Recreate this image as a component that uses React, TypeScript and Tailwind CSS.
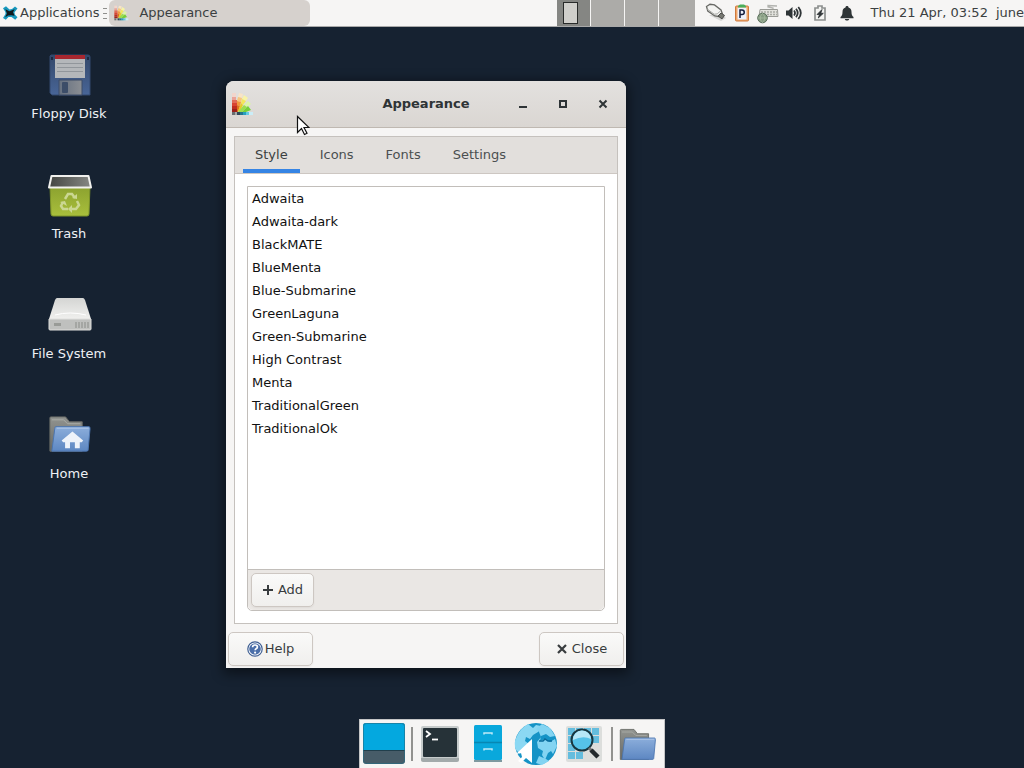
import React, { useState } from "react";

const TABS = ["Style", "Icons", "Fonts", "Settings"];
const STYLES = [
  "Adwaita",
  "Adwaita-dark",
  "BlackMATE",
  "BlueMenta",
  "Blue-Submarine",
  "GreenLaguna",
  "Green-Submarine",
  "High Contrast",
  "Menta",
  "TraditionalGreen",
  "TraditionalOk",
];

function XfceLogo() {
  return (
    <svg className="h-4 w-4 shrink-0" viewBox="0 0 16 16" aria-hidden="true">
      <path d="M1 3.2 4 1.3 7.5 4.5 10 4 13 1.5 15.5 3.5 12.5 7.3 12.8 9.5 15.5 12.3 13.2 14.8 9.5 12 6.5 12 3.8 14.8 1 13 3.5 9 3.4 7Z" fill="#1798bd" />
      <path d="M3.4 4.3 7.4 6.3 12.6 4.2 11 7.3 12.6 10.8 9.3 10.2 6 10.6 3.2 12.3 4.9 8.5Z" fill="#11191c" />
    </svg>
  );
}

function PaletteIcon({ className }: { className: string }) {
  return (
    <svg className={className} viewBox="0 0 24 24" aria-hidden="true">
      <path d="M2 1h4v4H2z" fill="#f2d5cb" />
      <path d="M2 5h4v3H2z" fill="#eaa398" />
      <path d="M2 8h5v3H2z" fill="#e06a58" />
      <path d="M2 11h5v3H2z" fill="#d94332" />
      <path d="M2 14h5v3H2z" fill="#bf2c20" />
      <path d="M2 17h5v3H2z" fill="#9c201b" />
      <path d="m9 1 4 1-1 4-4-1z" fill="#f8e4c6" />
      <path d="m8 5 4 1-1 4-4-1z" fill="#f9c67c" />
      <path d="m7 9 4 1-1 4-3-1z" fill="#f3993c" />
      <path d="m7 13 3 1-2 6H7z" fill="#e06f1d" />
      <path d="m14 3 4 3-2 3-4-2z" fill="#f8f3a6" />
      <path d="m12 7 4 2-3 4-2-2z" fill="#f3e758" />
      <path d="m11 11 2 2-3 6H8z" fill="#e5cb28" />
      <path d="m18 9 3 3-4 3-3-2z" fill="#dcf5a6" />
      <path d="m14 13 3 2-5 5H8z" fill="#9bdf4c" />
      <path d="m18 14 3 4-5 2h-4z" fill="#76cf38" />
      <path d="M2 20h3v3H2z" fill="#696d70" />
      <path d="M5 20h2v3H5z" fill="#a7aaa9" />
      <path d="M7 20h3v3H7z" fill="#30495a" />
      <path d="M10 20h3v3h-3z" fill="#23758f" />
      <path d="M13 20h3v3h-3z" fill="#299fbe" />
      <path d="M16 20h3v3h-3z" fill="#65c9e4" />
      <path d="M19 20h4v3h-4z" fill="#caedf7" />
    </svg>
  );
}

function UsbIcon() {
  return (
    <svg className="h-6 w-6" viewBox="0 0 24 24" aria-hidden="true">
      <path d="m6 14 12 6 5-3-4-3z" fill="#d5d5d3" />
      <path d="M3.5 5.5 7 3.3l4.500.6 6.500 5.100 1.300 3.500-3.500 3-4-.5-7-5Z" fill="#f3f3f1" stroke="#686965" strokeWidth="1.3" />
      <path d="m4.200 8 7 5.200 3-.3 3.400-3" fill="none" stroke="#a8a9a5" strokeWidth="1" />
      <path d="m15 15 3-3 3.500 2.400-2.500 3.500Z" fill="#777872" stroke="#4b4c49" strokeWidth="1" />
    </svg>
  );
}

function ClipboardIcon() {
  return (
    <svg className="h-5 w-4" viewBox="0 0 16 20" aria-hidden="true">
      <rect x="1.500" y="3" width="13" height="15" rx="1" fill="#f0a66a" stroke="#cf7a3d" />
      <rect x="3.500" y="4.500" width="9" height="12" fill="#eef2fb" />
      <path d="M4 4.500V3l2-1.500h4L12 3v1.500z" fill="#49ae5a" />
      <path d="M6 15V7h2a2.200 2.200 0 0 1 0 4.500H6" fill="none" stroke="#141c3c" strokeWidth="1.500" />
    </svg>
  );
}

function KeyboardIcon() {
  return (
    <svg className="h-6 w-6" viewBox="0 0 24 24" aria-hidden="true">
      <path d="M17 9V7l-5-1V4.500l9 .5" fill="none" stroke="#b2b3af" strokeWidth="1.3" />
      <path d="M4 8.500h17.500l.500 7H3z" fill="#e2e2dd" stroke="#9a9b96" />
      <path d="M5 11h16M5 13.500h16" stroke="#a9aaa4" strokeWidth="1.3" strokeDasharray="2 1" />
      <circle cx="6.5" cy="17" r="4.800" fill="#879c83" stroke="#5d725e" />
      <path d="M2 17h9M6.5 12.5c-3 3-3 6 0 9m0-9c3 3 3 6 0 9" fill="none" stroke="#a8bca1" strokeWidth=".8" />
    </svg>
  );
}

function SpeakerIcon() {
  return (
    <svg className="h-4 w-4" viewBox="0 0 16 16" aria-hidden="true">
      <path d="M0 5.500h2.500L6.500 2v12l-4-3.500H0z" fill="#2e3436" />
      <path d="M8 5.500q2 2.500 0 5M10 3.800q3.400 4.200 0 8.400M12.300 2q5 6 0 12" fill="none" stroke="#2e3436" strokeWidth="1.800" />
    </svg>
  );
}

function BatteryIcon() {
  return (
    <svg className="h-4 w-3" viewBox="0 0 12 16" aria-hidden="true">
      <path d="M1 3h3V1h4v2h3v12H1z" fill="#f4f4f2" stroke="#8d908f" strokeWidth="1.7" />
      <path d="M8 4.500 3 9.500h2.500L4.300 13l5-4.700H6.800z" fill="#2e3436" stroke="#2e3436" strokeWidth=".8" />
    </svg>
  );
}

function BellIcon() {
  return (
    <svg className="h-4 w-3.5" viewBox="0 0 14 16" aria-hidden="true">
      <path d="M7 1c1 0 1.500.6 1.500 1.400C10.900 3 11.500 5 11.500 7c0 3 .8 4 2 5v1.300H.500V12c1.200-1 2-2 2-5 0-2 .600-4 3-4.600C5.500 1.600 6 1 7 1M4.800 14h4.400c-.4 2-4 2-4.400 0" fill="#2e3436" />
    </svg>
  );
}

function FloppyIcon() {
  return (
    <svg className="h-12 w-12" viewBox="0 0 48 48" aria-hidden="true">
      <defs>
        <linearGradient id="floppyBody" x1="0" y1="0" x2="0" y2="1">
          <stop offset="0" stopColor="#34486a" />
          <stop offset="1" stopColor="#486597" />
        </linearGradient>
        <linearGradient id="floppyShutter">
          <stop offset="0" stopColor="#657080" />
          <stop offset="1" stopColor="#8b8e93" />
        </linearGradient>
      </defs>
      <path d="M6 4h37q2 0 2 2v38H7l-2-2V5z" fill="url(#floppyBody)" stroke="#33496e" />
      <path d="M10 4h30v4H10z" fill="#a8272f" />
      <path d="M10 8h30v19H10z" fill="#b4b7ba" />
      <path d="M12 12.500h26M12 16.500h26M12 20.500h26" stroke="#91969b" />
      <path d="M14 29h23v15H14z" fill="url(#floppyShutter)" stroke="#3c4d68" />
      <rect x="17" y="31" width="6" height="11" rx="1" fill="#3c4d68" />
      <path d="M6 6h2v3H6zm36 0h2v3h-2z" fill="#1b2940" />
    </svg>
  );
}

function TrashIcon() {
  return (
    <svg className="h-12 w-12" viewBox="0 0 48 48" aria-hidden="true">
      <defs>
        <linearGradient id="trashBody" x1="0" y1="0" x2="0" y2="1">
          <stop offset="0" stopColor="#8ba12f" />
          <stop offset="1" stopColor="#a9bf3c" />
        </linearGradient>
        <linearGradient id="trashInside">
          <stop offset="0" stopColor="#444642" />
          <stop offset="1" stopColor="#868884" />
        </linearGradient>
      </defs>
      <path d="M5 15h40l-1 28q0 2-2 2H8q-2 0-2-2z" fill="url(#trashBody)" stroke="#7c9329" />
      <path d="M6.500 5h37l2.500 11.500H4z" fill="url(#trashInside)" stroke="#f1f1ee" strokeWidth="2" strokeLinejoin="round" />
      <g fill="none" stroke="#cbd792" strokeWidth="2.500">
        <path d="m20 28 3-5h4l3 4" />
        <path d="m32 30 2 4-3 4h-4" />
        <path d="M23 38h-5l-2-3 2-4" />
      </g>
      <path d="m27 27 5 1V23zm0 7v8l-4-4zm-12-3 5-1 2 5z" fill="#cbd792" />
    </svg>
  );
}

function DriveIcon() {
  return (
    <svg className="h-12 w-12" viewBox="0 0 48 48" aria-hidden="true">
      <defs>
        <linearGradient id="driveTop" x1="0" y1="0" x2="0" y2="1">
          <stop offset="0" stopColor="#d4d5d3" />
          <stop offset="1" stopColor="#f0f0ee" />
        </linearGradient>
      </defs>
      <path d="M12 7h26q1 0 2 2l6 19H4l6-19q1-2 2-2" fill="url(#driveTop)" />
      <path d="M4 28h42v10q0 1-1 1H5q-1 0-1-1z" fill="#bfc0be" stroke="#dededc" />
      <path d="M10 24q15-4 31 0" fill="none" stroke="#fff" />
      <path d="M31 31v6m3-6v6m3-6v6m3-6v6m3-6v6" stroke="#8a8c88" />
      <path d="M9 32h7v3H9z" fill="#999b97" />
    </svg>
  );
}

function FolderIcon({ home = false }: { home?: boolean }) {
  return (
    <svg className="h-12 w-12" viewBox={home ? "-1 -1 49 49" : "-1 -6 56 56"} aria-hidden="true">
      <defs>
        <linearGradient id="folderFront" x1="0" y1="0" x2="0" y2="1">
          <stop offset="0" stopColor="#8caedb" />
          <stop offset="1" stopColor="#5d87c2" />
        </linearGradient>
        <linearGradient id="folderBack" x1="0" y1="0" x2="0" y2="1">
          <stop offset="0" stopColor="#929490" />
          <stop offset="1" stopColor="#666864" />
        </linearGradient>
      </defs>
      <path d="M4 40V6q0-1 1-1h15l4 5h13v30z" fill="url(#folderBack)" stroke="#666864" />
      <path d="M6 8h12l4 4h13" fill="none" stroke="#aaaca7" />
      <path d="M10 15h34q1 0 1 2l-2 22q0 1-2 1H6l3-23q0-2 1-2" fill="url(#folderFront)" stroke="#4b75b0" />
      <path d="M11 16.500h32.500" stroke="#b3cae9" />
      {home && <path d="m27 20 11 9-1.500 2h-2v6h-5v-6h-5v6h-5v-6h-2L16 29z" fill="#eef3fa" />}
    </svg>
  );
}

function HelpIcon() {
  return (
    <svg className="h-4 w-4" viewBox="0 0 16 16" aria-hidden="true">
      <circle cx="8" cy="8" r="7.200" fill="#fff" stroke="#3f5f93" strokeWidth="1.200" />
      <circle cx="8" cy="8" r="5.800" fill="#4b6fa9" />
      <path d="M5.600 6.200q0-2.200 2.400-2.200t2.400 2q0 1.100-1.300 1.800-.9.500-.9 1.500" fill="none" stroke="#fff" strokeWidth="1.700" />
      <circle cx="8.100" cy="11.600" r="1.100" fill="#fff" />
    </svg>
  );
}

function DesktopIcon() {
  return (
    <svg className="h-12 w-12" viewBox="0 0 48 48" aria-hidden="true">
      <rect x="3" y="3" width="42" height="41" rx="3" fill="#475c68" />
      <path d="M3 30V6q0-3 3-3h36q3 0 3 3v24z" fill="#04a8df" />
      <path d="M3 30.500h42" stroke="#213f4c" />
      <rect x="3.500" y="3.500" width="41" height="40" rx="3" fill="none" stroke="#246c86" strokeOpacity=".6" />
    </svg>
  );
}

function TerminalIcon() {
  return (
    <svg className="h-12 w-12" viewBox="0 0 48 48" aria-hidden="true">
      <rect x="5" y="6" width="38" height="35" rx="2" fill="#c6cbcb" />
      <path d="M5 38h38v2q0 2-2 2H7q-2 0-2-2z" fill="#a3aaab" />
      <rect x="7" y="8" width="34" height="29" rx="1" fill="#263238" />
      <path d="m10 11 4 3-4 3" fill="none" stroke="#fff" strokeWidth="1.800" />
      <path d="M16 19.500h6" stroke="#fff" strokeWidth="1.800" />
    </svg>
  );
}

function CabinetIcon() {
  return (
    <svg className="h-12 w-12" viewBox="0 0 48 48" aria-hidden="true">
      <path d="M10 40h28v2H10z" fill="#7e999f" />
      <rect x="10" y="5" width="28" height="35" rx="1.500" fill="#09a8dc" />
      <path d="M10 22.500h28" stroke="#0787b3" strokeWidth="1.500" />
      <path d="M20 14.500V13h8v1.500M20 30.500V29h8v1.500" fill="none" stroke="#bfeaf8" strokeWidth="1.500" />
    </svg>
  );
}

function GlobeIcon() {
  return (
    <svg className="h-12 w-12" viewBox="0 0 48 48" aria-hidden="true">
      <circle cx="24" cy="24" r="21" fill="#1593c6" />
      <path d="M5 16C7 11 11 7 16 4l5 4 3-3 5 1-3 6-5 3-3 4-4-2-1 4 4 3-5 5-4 5-4-4q-3-7 1-14" fill="#8bd8f3" />
      <path d="m30 4 8 4 5 8-5 1-4-3-5 2-1 5 5-2 5 3 5-3 2 7-4 8-2-3-3 2-3 7-3-5 1-4-5-3-1-6 4-5-2-5-3-3z" fill="#83d4f2" />
      <path d="m27 36 7 3 3 2-7 4-6-2z" fill="#83d4f2" />
      <path d="M27 21h4l2-2 3 2h4" fill="none" stroke="#086a9a" strokeWidth="1.500" />
      <path d="m20 19-16 15 5-1 1 4-4 4 3 2 5-5 6 5z" fill="#fff" />
    </svg>
  );
}

function SearchIcon() {
  return (
    <svg className="h-12 w-12" viewBox="0 0 48 48" aria-hidden="true">
      <rect x="6" y="6" width="36" height="36" rx="2" fill="#dcdedc" />
      <path d="M8 8h7v7H8zm8 0h7v7h-7zm8 0h7v7h-7zm8 0h7v7h-7zM8 16h7v7H8zm24 0h7v7h-7zM8 24h7v7H8zm0 8h7v7H8zm8 0h7v7h-7z" fill="#64bdde" />
      <circle cx="22" cy="20" r="10.500" fill="#56c2e9" stroke="#183640" strokeWidth="2" />
      <path d="M13 20a9 9 0 0 1 18-1q-8-4-18 1" fill="#b7e7f7" />
      <path d="m29 28 3 3" stroke="#777" strokeWidth="3" />
      <path d="m31 30 7 7" stroke="#242a2d" strokeWidth="4.500" />
    </svg>
  );
}

function TopPanel() {
  return (
    <header className="flex h-[27px] shrink-0 items-center border-b border-[#a9a9a9] bg-[#f6f5f4] text-[#3b3f41]">
      <button className="flex h-full items-center gap-0.5 pl-0.5 whitespace-nowrap">
        <XfceLogo />
        Applications
      </button>
      <span className="ml-1 flex w-1 flex-col gap-1" aria-hidden="true">
        <i className="h-px bg-[#8f8f8c]" />
        <i className="h-px bg-[#8f8f8c]" />
        <i className="h-px bg-[#8f8f8c]" />
      </span>
      <button className="ml-0.5 flex h-full w-[201px] items-center gap-2.5 rounded-md bg-[#d6d1cd] pl-1 text-left">
        <PaletteIcon className="h-4 w-4" />
        Appearance
      </button>
      <div className="ml-auto flex shrink-0 items-center">
        <div className="flex h-[26px] gap-px" role="group" aria-label="Workspaces">
          <button className="flex w-[33px] items-center bg-[#858683] pl-1.5" aria-label="Workspace 1">
            <span className="block h-[22px] w-[15px] border border-[#292b2a] bg-[#d0cfcb]" />
          </button>
          <button className="w-[33px] bg-[#acaba8]" aria-label="Workspace 2" />
          <button className="w-[33px] bg-[#acaba8]" aria-label="Workspace 3" />
          <button className="w-9 bg-[#acaba8]" aria-label="Workspace 4" />
        </div>
        <button className="ml-2" aria-label="Removable drive"><UsbIcon /></button>
        <button className="ml-[7px]" aria-label="Clipboard"><ClipboardIcon /></button>
        <button className="ml-1.5" aria-label="Keyboard layout"><KeyboardIcon /></button>
        <button className="ml-1.5" aria-label="Volume"><SpeakerIcon /></button>
        <button className="ml-3" aria-label="Power"><BatteryIcon /></button>
        <button className="ml-3.5" aria-label="Notifications"><BellIcon /></button>
        <button className="ml-4 whitespace-nowrap">Thu 21 Apr, 03:52</button>
        <button className="ml-2">june</button>
      </div>
    </header>
  );
}

function Shortcut({ label, children }: { label: string; children: React.ReactNode }) {
  return (
    <button className="flex h-[120px] w-full flex-col items-center text-[#eef1f5]">
      {children}
      <span className="mt-[5px] leading-5">{label}</span>
    </button>
  );
}

const BUTTON =
  "flex items-center justify-center rounded-[5px] border border-[#cdc7c2] bg-linear-to-b from-[#fafaf9] to-[#f0efed] text-[#383c3e] shadow-xs";

function AppearanceWindow() {
  const [tab, setTab] = useState("Style");
  return (
    <section
      aria-label="Appearance"
      className="absolute top-[81px] left-[226px] w-[400px] rounded-t-lg bg-[#f6f5f4] shadow-[0_3px_12px_3px_rgba(0,0,0,0.45)]"
    >
      <div className="grid h-[47px] grid-cols-[120px_1fr_120px] items-center rounded-t-lg border-b border-[#bfb8b1] bg-linear-to-b from-[#e3e1df] to-[#dad6d2] text-[#2e3436]">
        <PaletteIcon className="ml-1 h-6 w-6" />
        <h1 className="text-center font-bold">Appearance</h1>
        <div className="flex justify-end gap-4 pr-[11px]">
          <button className="flex h-6 w-6 items-center justify-center" aria-label="Minimize">
            <svg className="h-4 w-4" viewBox="0 0 16 16"><path d="M4 11h8" stroke="currentColor" strokeWidth="2" /></svg>
          </button>
          <button className="flex h-6 w-6 items-center justify-center" aria-label="Maximize">
            <svg className="h-4 w-4" viewBox="0 0 16 16"><path d="M5 5h6v6H5z" fill="none" stroke="currentColor" strokeWidth="2" /></svg>
          </button>
          <button className="flex h-6 w-6 items-center justify-center" aria-label="Close window">
            <svg className="h-4 w-4" viewBox="0 0 16 16"><path d="m4.500 4.500 7 7m0-7-7 7" stroke="currentColor" strokeWidth="2" /></svg>
          </button>
        </div>
      </div>

      <div className="mx-2 mt-2 border border-[#c5c1bd] bg-white">
        <div role="tablist" className="flex h-[37px] gap-2 border-b border-[#cdc7c2] bg-[#e2dfdc] px-2">
          {TABS.map((name) => (
            <button
              key={name}
              role="tab"
              aria-selected={tab === name}
              onClick={() => setTab(name)}
              className={
                tab === name
                  ? "border-b-4 border-[#3584e4] px-3 pt-1 text-[#3b3f41]"
                  : "border-b-4 border-transparent px-3 pt-1 text-[#4b4f50]"
              }
            >
              {name}
            </button>
          ))}
        </div>
        <div className="p-3">
          <div className="rounded-b-[5px] border border-[#c2beba]">
            <ul role="listbox" aria-label="Style" className="h-[382px] bg-white text-[#111]">
              {STYLES.map((name) => (
                <li key={name} role="option" aria-selected="false" className="h-[23px] px-1 leading-[23px]">
                  {name}
                </li>
              ))}
            </ul>
            <div className="flex h-[41px] items-center rounded-b-[5px] border-t border-[#c2beba] bg-[#eae7e4] px-[3px]">
              <button className={`${BUTTON} h-[34px] w-[63px] gap-1`}>
                <svg className="h-3 w-3" viewBox="0 0 12 12" aria-hidden="true"><path d="M6 1v10M1 6h10" stroke="currentColor" strokeWidth="2" /></svg>
                Add
              </button>
            </div>
          </div>
        </div>
      </div>

      <div className="flex justify-between px-0.5 pt-2 pb-0.5">
        <button className={`${BUTTON} h-[34px] w-[85px] gap-0.5`}>
          <HelpIcon />
          Help
        </button>
        <button className={`${BUTTON} h-[34px] w-[85px] gap-1`}>
          <svg className="h-3 w-3" viewBox="0 0 12 12" aria-hidden="true"><path d="m2 2 8 8m0-8-8 8" stroke="currentColor" strokeWidth="2.200" /></svg>
          Close
        </button>
      </div>
    </section>
  );
}

function Dock() {
  return (
    <nav
      aria-label="Dock"
      className="absolute bottom-0 left-1/2 flex h-[49px] w-[306px] -translate-x-1/2 items-center border border-b-0 border-[#c4c5c6] bg-[#f6f5f4]"
    >
      <button aria-label="Show desktop"><DesktopIcon /></button>
      <span className="ml-[3px] h-[34px] w-0.5 bg-[#92928f]" />
      <button className="ml-[3px]" aria-label="Terminal"><TerminalIcon /></button>
      <button aria-label="File manager"><CabinetIcon /></button>
      <button aria-label="Web browser"><GlobeIcon /></button>
      <button aria-label="Application finder"><SearchIcon /></button>
      <span className="ml-[3px] h-[34px] w-0.5 bg-[#92928f]" />
      <button className="ml-[3px]" aria-label="Home folder"><FolderIcon /></button>
    </nav>
  );
}

export default function App() {
  return (
    <main className="relative flex min-h-screen flex-col overflow-hidden bg-[#162231] font-['DejaVu_Sans',sans-serif] text-[13px] leading-5">
      <TopPanel />
      <div className="ml-2 flex w-[122px] flex-col pt-6">
        <Shortcut label="Floppy Disk"><FloppyIcon /></Shortcut>
        <Shortcut label="Trash"><TrashIcon /></Shortcut>
        <Shortcut label="File System"><DriveIcon /></Shortcut>
        <Shortcut label="Home"><FolderIcon home /></Shortcut>
      </div>
      <AppearanceWindow />
      <Dock />
      <svg className="pointer-events-none absolute top-[115px] left-[296px] h-[22px] w-[14px]" viewBox="0 0 14 22" aria-hidden="true">
        <path d="M1.500 1.500v16l4-4 3 6 2.500-1.200-3-5.800h5z" fill="#fff" stroke="#111" strokeWidth="1.200" />
      </svg>
    </main>
  );
}
